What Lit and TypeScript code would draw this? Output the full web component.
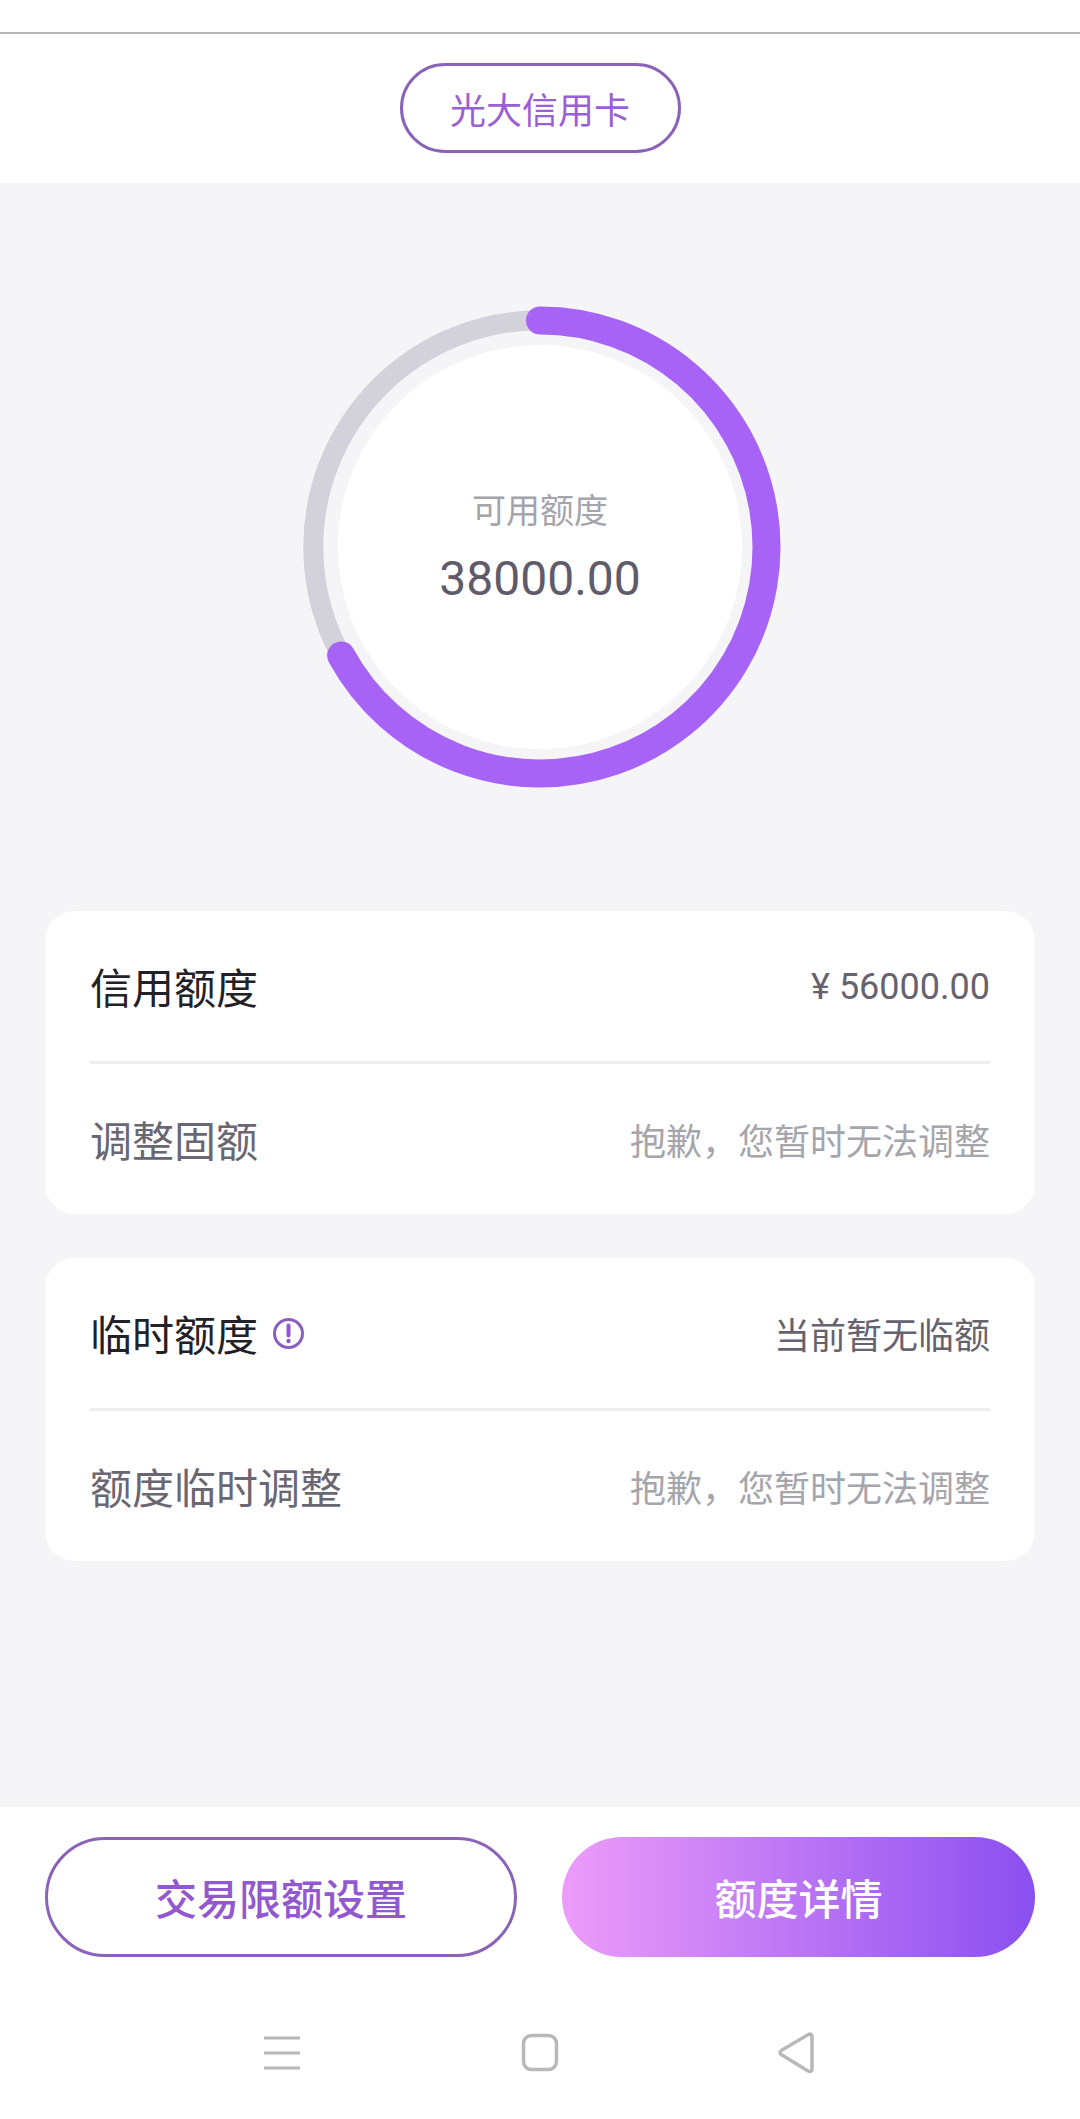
import { LitElement, html, css, svg } from "lit";
import { customElement } from "lit/decorators.js";

const R = 226.5;
const C = 240;
const arcEnd = (deg: number) => {
  const a = (deg * Math.PI) / 180;
  return { x: C + R * Math.sin(a), y: C - R * Math.cos(a) };
};

@customElement("app-root")
export class AppRoot extends LitElement {
  static styles = css`
    :host {
      display: flex;
      flex-direction: column;
      width: 1080px;
      height: 2119px;
      background: #fff;
      font-family: "Noto Sans CJK SC", "Roboto", sans-serif;
      overflow: hidden;
    }
    .status { height: 32px; flex: none; border-bottom: 2px solid #b6b6b6; }
    .head { height: 148px; flex: none; padding-bottom: 1px; display: flex; align-items: center; justify-content: center; }
    .pill {
      box-sizing: border-box;
      width: 281px;
      height: 90px;
      border: 3px solid #8a63b8;
      border-radius: 45px;
      display: flex;
      align-items: center;
      justify-content: center;
      color: #9a5fd2;
      font-size: 36px;
      line-height: 1;
    }
    main {
      flex: 1;
      background: #f5f5f7;
      padding: 124px 45px 0;
      display: flex;
      flex-direction: column;
      min-height: 0;
    }
    .ring {
      position: relative;
      width: 480px;
      height: 480px;
      align-self: center;
      margin-bottom: 124px;
      display: flex;
      align-items: center;
      justify-content: center;
    }
    .ring svg { position: absolute; inset: 0; overflow: visible; }
    .disc {
      position: relative;
      width: 404px;
      height: 404px;
      border-radius: 50%;
      background: #fff;
      display: flex;
      flex-direction: column;
      align-items: center;
      justify-content: center;
    }
    .disc .lab { font-size: 34px; line-height: 44px; color: #a4a4ab; }
    .disc .num { font-family: Roboto, sans-serif; font-size: 48px; line-height: 56px; margin-top: 20px; color: #5f5b6b; }
    .card { background: #fff; border-radius: 30px; padding: 0 45px; margin-bottom: 44px; }
    .row { height: 150px; display: flex; align-items: center; justify-content: space-between; }
    .row + .row { border-top: 3px solid #eeeef0; }
    .name { font-size: 42px; line-height: 1; display: flex; align-items: center; gap: 15px; color: #6a6672; }
    .name.strong { color: #222127; }
    .val { font-size: 36px; line-height: 1; color: #66626e; }
    .val.num { font-family: Roboto, sans-serif; padding-top: 2px; }
    .val.off { color: #a5a5ac; }
    .info { width: 31px; height: 31px; flex: none; }
    footer { height: 312px; flex: none; padding: 30px 45px 0; box-sizing: border-box; display: flex; flex-direction: column; }
    .btns { display: flex; justify-content: space-between; }
    .btn {
      box-sizing: border-box;
      height: 120px;
      border-radius: 60px;
      display: flex;
      align-items: center;
      justify-content: center;
      font-size: 42px;
      font-weight: 500;
      line-height: 1;
    }
    .btn.line { width: 472px; border: 3px solid #8a63b8; color: #9158d0; }
    .btn.fill { width: 473px; background: linear-gradient(90deg, #ec9cf9, #8a4ff0); color: #fff; }
    nav { display: flex; justify-content: center; gap: 216px; margin-top: 74px; }
    nav svg { width: 40px; height: 44px; fill: none; stroke: #b8b8b8; stroke-width: 3.5; }
  `;

  private rows = [
    [
      { name: "信用额度", strong: true, val: "¥ 56000.00", cls: "num" },
      { name: "调整固额", val: "抱歉，您暂时无法调整", cls: "off" },
    ],
    [
      { name: "临时额度", strong: true, info: true, val: "当前暂无临额", cls: "" },
      { name: "额度临时调整", val: "抱歉，您暂时无法调整", cls: "off" },
    ],
  ];

  render() {
    const end = arcEnd(241.4);
    return html`
      <div class="status"></div>
      <div class="head"><div class="pill">光大信用卡</div></div>
      <main>
        <div class="ring">
          <svg width="480" height="480" viewBox="0 0 480 480" fill="none">
            <circle cx="240" cy="240" r="226.7" stroke="#d3d1d9" stroke-width="20"></circle>
            <path d="M240 ${C - R} A${R} ${R} 0 1 1 ${end.x} ${end.y}" stroke="#a663f5" stroke-width="28" stroke-linecap="round"></path>
          </svg>
          <div class="disc">
            <div class="lab">可用额度</div>
            <div class="num">38000.00</div>
          </div>
        </div>
        ${this.rows.map(
          (card) => html`<div class="card">
            ${card.map(
              (r: any) => html`<div class="row">
                <div class="name ${r.strong ? "strong" : ""}">
                  ${r.name}
                  ${r.info
                    ? html`<svg class="info" viewBox="0 0 31 31" fill="none">
                        <circle cx="15.5" cy="15.5" r="14" stroke="#8a5fc4" stroke-width="3"></circle>
                        <path d="M15.5 7.5v10" stroke="#9158d0" stroke-width="4" stroke-linecap="round"></path>
                        <circle cx="15.5" cy="23" r="2.2" fill="#9158d0"></circle>
                      </svg>`
                    : ""}
                </div>
                <div class="val ${r.cls}">${r.val}</div>
              </div>`
            )}
          </div>`
        )}
      </main>
      <footer>
        <div class="btns">
          <div class="btn line">交易限额设置</div>
          <div class="btn fill">额度详情</div>
        </div>
        <nav>
          <svg viewBox="0 0 40 44">
            <path d="M0 7h36M0 22h36M0 37h36" stroke-width="3"></path>
          </svg>
          <svg viewBox="0 0 40 44">
            ${svg`<rect x="3.5" y="4.5" width="33" height="34" rx="8"></rect>`}
          </svg>
          <svg viewBox="0 0 40 44">
            ${svg`<path d="M36 6 Q36 1.5 32 3.8 L6 19 Q2 21.5 6 24 L32 40 Q36 42 36 37.5 Z"></path>`}
          </svg>
        </nav>
      </footer>
    `;
  }
}
